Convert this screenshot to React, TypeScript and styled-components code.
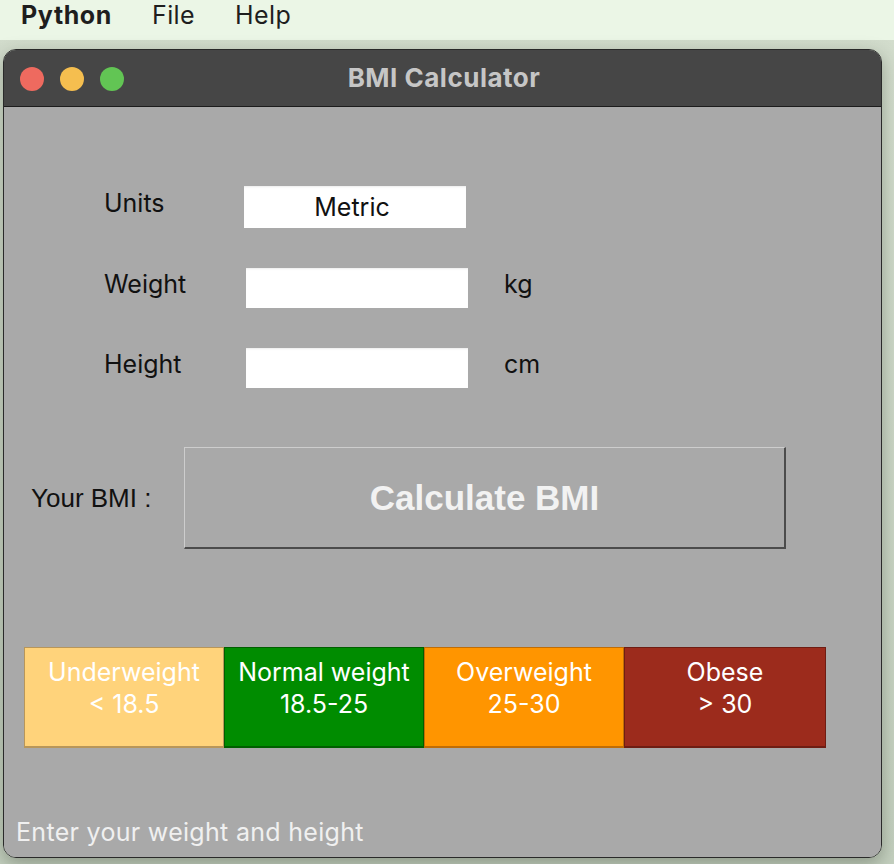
import React from "react";
import styled, { createGlobalStyle } from "styled-components";

const GlobalStyle = createGlobalStyle`
    html, body {
        margin: 0;
        padding: 0;
        height: 100%;
        background: linear-gradient(180deg, #d3ddcd 0%, #c4d0bf 100%);
        overflow: hidden;
    }
`;

const MAC_FONT = `Inter, "Noto Sans", "Liberation Sans", sans-serif`;
const TK_FONT = `"Liberation Sans", Arial, sans-serif`;

const MenuBar = styled.div`
    height: 40px;
    background: #ebf6e6;
    display: flex;
    align-items: center;
    padding-left: 21px;
    gap: 40px;
    font-family: ${MAC_FONT};
    font-size: 25px;
    color: #1e1e1e;
`;

const MenuItem = styled.span<{ $bold?: boolean }>`
    font-weight: ${({ $bold }) => ($bold ? 700 : 400)};
    letter-spacing: ${({ $bold }) => ($bold ? "0.6px" : "0.4px")};
    margin-top: -10px;
`;

const Window = styled.div`
    margin: 9px 12px 0 3px;
    height: 809px;
    border: 1px solid #2a2a2a;
    border-radius: 13px;
    overflow: hidden;
    box-shadow: 0 6px 18px rgba(40, 50, 35, 0.35);
    display: flex;
    flex-direction: column;
    box-sizing: border-box;
`;

const TitleBar = styled.div`
    height: 56px;
    flex: none;
    background: #464646;
    border-bottom: 1px solid #1c1c1c;
    display: flex;
    align-items: center;
    position: relative;
`;

const Lights = styled.div`
    display: flex;
    gap: 16px;
    padding-left: 16px;
    margin-top: 1px;
`;

const Light = styled.span<{ $color: string }>`
    width: 24px;
    height: 24px;
    border-radius: 50%;
    background: ${({ $color }) => $color};
`;

const Title = styled.div`
    position: absolute;
    left: 0;
    right: 0;
    text-align: center;
    font-family: ${MAC_FONT};
    font-weight: 700;
    font-size: 26px;
    letter-spacing: 0.5px;
    color: #c6c6c6;
    margin: -2px 0 0 3px;
    pointer-events: none;
`;

const Content = styled.div`
    flex: 1;
    background: #a9a9a9;
    display: flex;
    flex-direction: column;
`;

const Form = styled.div`
    padding: 79px 0 0 100px;
    display: flex;
    flex-direction: column;
    gap: 40px;
`;

const FormRow = styled.div`
    display: flex;
    align-items: center;
`;

const Label = styled.span`
    width: 140px;
    font-family: ${MAC_FONT};
    font-size: 25px;
    color: #111;
    margin-top: -8px;
`;

const Field = styled.div<{ $offset?: number; $h: number }>`
    width: 222px;
    height: ${({ $h }) => $h}px;
    margin-left: ${({ $offset }) => $offset ?? 0}px;
    padding-right: 6px;
    box-sizing: border-box;
    background: #fff;
    display: flex;
    align-items: center;
    justify-content: center;
    font-family: ${MAC_FONT};
    font-size: 25px;
    color: #111;
    box-shadow: inset 0 2px 2px -1px rgba(0, 0, 0, 0.08);
`;

const Unit = styled.span`
    margin-left: 36px;
    font-family: ${MAC_FONT};
    font-size: 25px;
    color: #111;
    margin-top: -8px;
`;

const BmiRow = styled.div`
    display: flex;
    align-items: center;
    margin-top: 59px;
    padding-left: 27px;
`;

const BmiLabel = styled.span`
    width: 153px;
    font-family: ${TK_FONT};
    font-size: 26px;
    color: #111;
`;

const CalcButton = styled.div`
    width: 602px;
    height: 102px;
    box-sizing: border-box;
    border-top: 1px solid #cdcdcd;
    border-left: 1px solid #cdcdcd;
    border-right: 2px solid #4c4c4c;
    border-bottom: 2px solid #4c4c4c;
    display: flex;
    align-items: center;
    justify-content: center;
    font-family: ${TK_FONT};
    font-weight: 700;
    font-size: 35px;
    color: #f2f2f2;
`;

const Bands = styled.div`
    display: flex;
    margin-top: 98px;
    padding-left: 20px;
`;

const Band = styled.div<{ $bg: string; $edge: string; $w: number }>`
    width: ${({ $w }) => $w}px;
    height: 101px;
    box-sizing: border-box;
    background: ${({ $bg }) => $bg};
    border: 1px solid ${({ $edge }) => $edge};
    border-bottom-width: 2px;
    padding-top: 8px;
    text-align: center;
    font-family: ${MAC_FONT};
    font-size: 25px;
    line-height: 32px;
    color: #fff;
`;

const Status = styled.div`
    margin-top: auto;
    padding: 0 0 10px 12px;
    font-family: ${MAC_FONT};
    font-size: 25px;
    letter-spacing: 0.3px;
    line-height: 30px;
    color: #f0f0f0;
`;

const bands = [
    { name: "Underweight", range: "< 18.5", bg: "#ffd37b", edge: "#b8965a", w: 200 },
    { name: "Normal weight", range: "18.5-25", bg: "#008c00", edge: "#005f00", w: 200 },
    { name: "Overweight", range: "25-30", bg: "#ff9500", edge: "#c06d05", w: 200 },
    { name: "Obese", range: "> 30", bg: "#9c2b1c", edge: "#6f1d13", w: 202 },
];

const App: React.FC = () => {
    return (
        <>
            <GlobalStyle />
            <MenuBar>
                <MenuItem $bold>Python</MenuItem>
                <MenuItem>File</MenuItem>
                <MenuItem>Help</MenuItem>
            </MenuBar>
            <Window>
                <TitleBar>
                    <Lights>
                        <Light $color="#ee6a5f" />
                        <Light $color="#f5be4f" />
                        <Light $color="#62c554" />
                    </Lights>
                    <Title>BMI Calculator</Title>
                </TitleBar>
                <Content>
                    <Form>
                        <FormRow>
                            <Label>Units</Label>
                            <Field $h={42}>Metric</Field>
                        </FormRow>
                        <FormRow>
                            <Label>Weight</Label>
                            <Field $h={40} $offset={2} />
                            <Unit>kg</Unit>
                        </FormRow>
                        <FormRow>
                            <Label>Height</Label>
                            <Field $h={40} $offset={2} />
                            <Unit>cm</Unit>
                        </FormRow>
                    </Form>
                    <BmiRow>
                        <BmiLabel>Your BMI :</BmiLabel>
                        <CalcButton>Calculate BMI</CalcButton>
                    </BmiRow>
                    <Bands>
                        {bands.map((b) => (
                            <Band key={b.name} $bg={b.bg} $edge={b.edge} $w={b.w}>
                                {b.name}
                                <br />
                                {b.range}
                            </Band>
                        ))}
                    </Bands>
                    <Status>Enter your weight and height</Status>
                </Content>
            </Window>
        </>
    );
};

export default App;
